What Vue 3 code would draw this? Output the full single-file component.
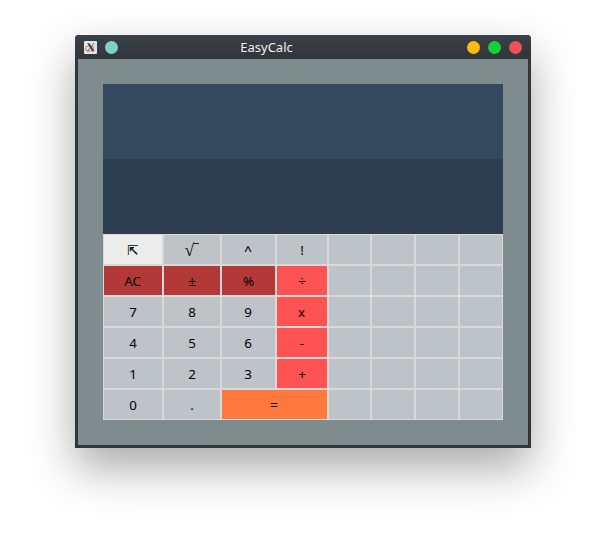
<script setup>
const keys = [
  { t: '⇱', c: 'light arrow' }, { t: '√', c: 'root' }, { t: '^', c: 'caret' }, { t: '!' }, {}, {}, {}, {},
  { t: 'AC', c: 'dark nudge' }, { t: '±', c: 'dark' }, { t: '%', c: 'dark' }, { t: '÷', c: 'red' }, {}, {}, {}, {},
  { t: '7' }, { t: '8' }, { t: '9', c: 'nudge' }, { t: 'x', c: 'red nudge' }, {}, {}, {}, {},
  { t: '4' }, { t: '5' }, { t: '6', c: 'nudge' }, { t: '-', c: 'red' }, {}, {}, {}, {},
  { t: '1' }, { t: '2' }, { t: '3', c: 'nudge' }, { t: '+', c: 'red' }, {}, {}, {}, {},
  { t: '0' }, { t: '.' }, { t: '=', c: 'equals' }, {}, {}, {}, {},
]
</script>

<template>
  <div class="desktop">
    <div class="window">
      <header class="titlebar">
        <div class="side">
          <svg class="app-icon" viewBox="0 0 12 12">
            <rect width="12" height="12" rx="1" fill="#dfe4ea" />
            <ellipse cx="5.2" cy="7" rx="3.8" ry="2.4" fill="none" stroke="#e58a68" stroke-width="1.1" />
            <path d="M3 2h1.9L9.6 9.4H7.7z" fill="#30343a" />
            <path d="M9.2 2L3.2 9.4" stroke="#4b5058" stroke-width="0.8" />
          </svg>
          <span class="dot teal"></span>
        </div>
        <h1 class="title">EasyCalc</h1>
        <div class="side controls">
          <span class="dot yellow"></span>
          <span class="dot green"></span>
          <span class="dot close"></span>
        </div>
      </header>
      <main class="body">
        <div class="display upper"></div>
        <div class="display lower"></div>
        <div class="keypad">
          <button v-for="(k, i) in keys" :key="i" class="key" :class="k.c"><span>{{ k.t }}</span></button>
        </div>
      </main>
    </div>
  </div>
</template>

<style>
body { background: #fff; }
</style>

<style scoped>
.desktop {
  box-sizing: border-box;
  width: 606px;
  height: 533px;
  padding: 35px 75px 0;
  overflow: hidden;
  font-family: "Noto Sans", "DejaVu Sans", sans-serif;
}
.window {
  box-sizing: border-box;
  width: 456px;
  height: 413px;
  padding: 0 3px 3px;
  background: #31363b;
  border-radius: 4px 4px 0 0;
  box-shadow: 0 20px 46px rgba(0, 0, 0, 0.34);
}
.titlebar {
  display: flex;
  align-items: center;
  justify-content: space-between;
  height: 24px;
  margin: 0 -3px;
  padding: 0 9px;
  box-sizing: border-box;
  border-radius: 4px 4px 0 0;
  background: linear-gradient(#3a4048, #31363b);
}
.side {
  display: flex;
  align-items: center;
  gap: 8px;
  width: 55px;
}
.app-icon { width: 13px; height: 13px; }
.dot { width: 13px; height: 13px; border-radius: 50%; }
.teal { background: #7dd1c8; }
.yellow { background: #fdbc0b; }
.green { background: #13d13d; }
.close { background: #f44f56; }
.title {
  margin: 0 0 0 -73px;
  font-size: 13px;
  font-weight: 400;
  line-height: 24px;
  color: #eff0f1;
}
.body {
  box-sizing: border-box;
  height: 386px;
  padding: 25px;
  background: #7f8c8d;
}
.display { height: 75px; }
.upper { background: #34495e; }
.lower { background: #2c3e50; }
.keypad {
  display: grid;
  grid-template-columns: 60px 58px 55px 52px 43px 44px 44px 44px;
  grid-auto-rows: 31px;
}
.key {
  display: flex;
  align-items: center;
  justify-content: center;
  margin: 0;
  padding: 0;
  border: 1px solid #d9d9d9;
  border-radius: 0;
  background: #bdc3c7;
  color: #000;
  font: 13.33px/18px "Noto Sans", "DejaVu Sans", sans-serif;
}
.nudge { padding-right: 1px; }
.caret { padding-right: 1px; -webkit-text-stroke: 0.2px #000; }
.light { background: #ececec; }
.dark { background: #b33939; }
.red { background: #ff5252; }
.equals { grid-column: span 2; padding-right: 1px; background: #ff793f; }
.root { padding-top: 2px; font-family: "Liberation Serif", serif; font-size: 17px; }
.root span { display: flex; align-items: flex-start; }
.root span::after {
  content: "";
  width: 6px;
  height: 1px;
  margin: 1px 0 0 -1px;
  background: #222;
}
.arrow {
  padding: 2px 1px 0 0;
  font-family: "DejaVu Sans", sans-serif;
  color: #080820;
  -webkit-text-stroke: 0.15px #080820;
}
</style>
